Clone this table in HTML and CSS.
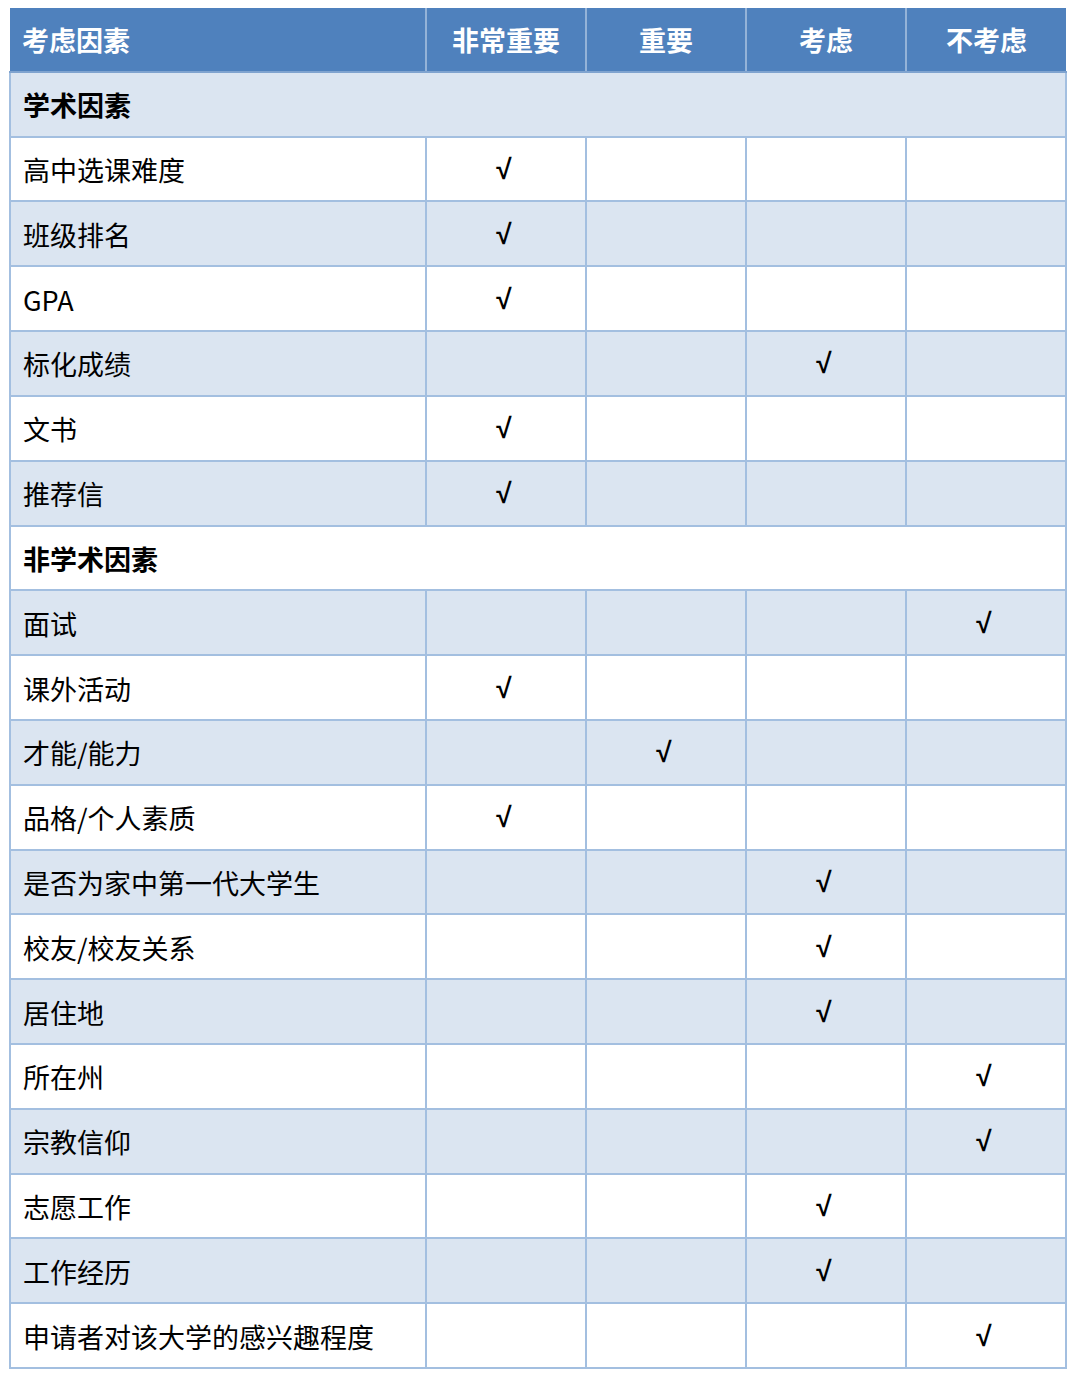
FILE: index.html
```html
<!DOCTYPE html>
<html lang="zh">
<head>
<meta charset="utf-8">
<link rel="stylesheet" href="styles.css">
</head>
<body>
<table class="grid">
  <colgroup>
    <col class="c-name"><col class="c-opt"><col class="c-opt"><col class="c-opt"><col class="c-opt">
  </colgroup>
  <thead>
    <tr class="head">
      <th class="name">考虑因素</th><th>非常重要</th><th>重要</th><th>考虑</th><th>不考虑</th>
    </tr>
  </thead>
  <tbody>
    <tr class="alt section"><td colspan="5" class="name">学术因素</td></tr>
    <tr><td class="name">高中选课难度</td><td class="ck">√</td><td></td><td></td><td></td></tr>
    <tr class="alt"><td class="name">班级排名</td><td class="ck">√</td><td></td><td></td><td></td></tr>
    <tr><td class="name">GPA</td><td class="ck">√</td><td></td><td></td><td></td></tr>
    <tr class="alt"><td class="name">标化成绩</td><td></td><td></td><td class="ck">√</td><td></td></tr>
    <tr><td class="name">文书</td><td class="ck">√</td><td></td><td></td><td></td></tr>
    <tr class="alt"><td class="name">推荐信</td><td class="ck">√</td><td></td><td></td><td></td></tr>
    <tr class="section"><td colspan="5" class="name">非学术因素</td></tr>
    <tr class="alt"><td class="name">面试</td><td></td><td></td><td></td><td class="ck">√</td></tr>
    <tr><td class="name">课外活动</td><td class="ck">√</td><td></td><td></td><td></td></tr>
    <tr class="alt"><td class="name">才能/能力</td><td></td><td class="ck">√</td><td></td><td></td></tr>
    <tr><td class="name">品格/个人素质</td><td class="ck">√</td><td></td><td></td><td></td></tr>
    <tr class="alt"><td class="name">是否为家中第一代大学生</td><td></td><td></td><td class="ck">√</td><td></td></tr>
    <tr><td class="name">校友/校友关系</td><td></td><td></td><td class="ck">√</td><td></td></tr>
    <tr class="alt"><td class="name">居住地</td><td></td><td></td><td class="ck">√</td><td></td></tr>
    <tr><td class="name">所在州</td><td></td><td></td><td></td><td class="ck">√</td></tr>
    <tr class="alt"><td class="name">宗教信仰</td><td></td><td></td><td></td><td class="ck">√</td></tr>
    <tr><td class="name">志愿工作</td><td></td><td></td><td class="ck">√</td><td></td></tr>
    <tr class="alt"><td class="name">工作经历</td><td></td><td></td><td class="ck">√</td><td></td></tr>
    <tr><td class="name">申请者对该大学的感兴趣程度</td><td></td><td></td><td></td><td class="ck">√</td></tr>
  </tbody>
</table>
</body>
</html>
```

FILE: styles.css
```css
html, body {
  margin: 0;
  padding: 0;
  background: #ffffff;
}
body {
  padding: 8px 0 0 9px;
  font-family: "Noto Sans CJK SC", "Noto Sans", sans-serif;
  color: #000000;
}
.grid {
  border-collapse: collapse;
  table-layout: fixed;
  width: 1058px;
}
.c-name { width: 416px; }
.c-opt { width: 160px; }
.grid th, .grid td {
  height: 60.82px;
  padding: 2px 0 0 0;
  text-align: center;
  vertical-align: middle;
  font-size: 27px;
  line-height: 30px;
  border: 2px solid #a3bfe0;
}
.grid td.name, .grid th.name {
  text-align: left;
  padding-left: 12px;
}
.grid td.ck {
  font-family: "Liberation Sans", "DejaVu Sans", sans-serif;
  font-size: 28px;
  font-weight: 700;
  padding-right: 4px;
}
.head th {
  background: #4f81bd;
  color: #ffffff;
  font-weight: 700;
  border-top: 0;
  border-left: 2px solid #94b3d8;
  border-right: 2px solid #94b3d8;
  border-bottom: 2px solid #7fa3cf;
}
.head th:first-child { border-left: 0; }
.head th:last-child { border-right: 0; }
.alt td { background: #dbe5f1; }
.section td { font-weight: 700; }
```
